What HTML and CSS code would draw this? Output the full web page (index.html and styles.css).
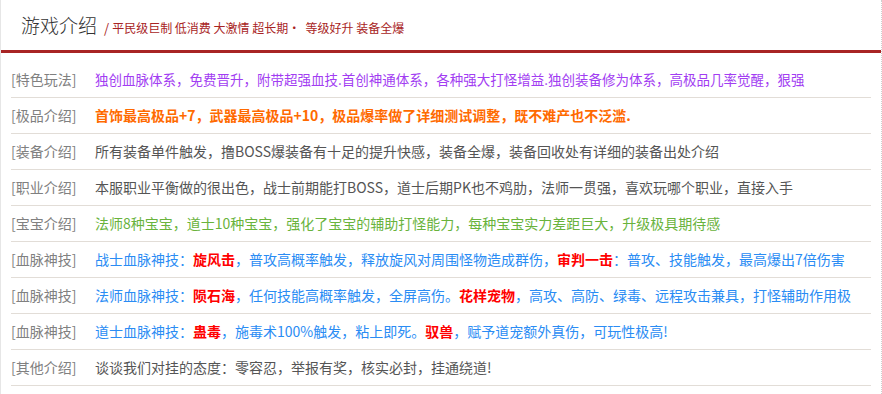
FILE: index.html
```html
<!DOCTYPE html>
<html lang="zh-CN">
<head>
<meta charset="utf-8">
<title>游戏介绍</title>
<link rel="stylesheet" href="styles.css">
</head>
<body>
<div class="panel">
  <div class="head">
    <h2 class="title">游戏介绍</h2>
    <span class="slash">/</span>
    <span class="sub">平民级巨制 低消费 大激情 超长期·&nbsp; 等级好升 装备全爆</span>
  </div>
  <ul class="list">
    <li class="row"><span class="label">[特色玩法]</span><span class="text purple">独创血脉体系，免费晋升，附带超强血技.首创神通体系，各种强大打怪增益.独创装备修为体系，高极品几率觉醒，狠强</span></li>
    <li class="row"><span class="label">[极品介绍]</span><span class="text orange">首饰最高极品+7，武器最高极品+10，极品爆率做了详细测试调整，既不难产也不泛滥.</span></li>
    <li class="row"><span class="label">[装备介绍]</span><span class="text gray">所有装备单件触发，撸BOSS爆装备有十足的提升快感，装备全爆，装备回收处有详细的装备出处介绍</span></li>
    <li class="row"><span class="label">[职业介绍]</span><span class="text gray">本服职业平衡做的很出色，战士前期能打BOSS，道士后期PK也不鸡肋，法师一贯强，喜欢玩哪个职业，直接入手</span></li>
    <li class="row"><span class="label">[宝宝介绍]</span><span class="text green">法师8种宝宝，道士10种宝宝，强化了宝宝的辅助打怪能力，每种宝宝实力差距巨大，升级极具期待感</span></li>
    <li class="row"><span class="label">[血脉神技]</span><span class="text blue">战士血脉神技：<b class="hot">旋风击</b>，普攻高概率触发，释放旋风对周围怪物造成群伤，<b class="hot">审判一击</b>：普攻、技能触发，最高爆出7倍伤害</span></li>
    <li class="row"><span class="label">[血脉神技]</span><span class="text blue">法师血脉神技：<b class="hot">陨石海</b>，任何技能高概率触发，全屏高伤。<b class="hot">花样宠物</b>，高攻、高防、绿毒、远程攻击兼具，打怪辅助作用极</span></li>
    <li class="row"><span class="label">[血脉神技]</span><span class="text blue">道士血脉神技：<b class="hot">蛊毒</b>，施毒术100%触发，粘上即死。<b class="hot">驭兽</b>，赋予道宠额外真伤，可玩性极高!</span></li>
    <li class="row"><span class="label">[其他介绍]</span><span class="text gray">谈谈我们对挂的态度：零容忍，举报有奖，核实必封，挂通绕道!</span></li>
  </ul>
</div>
</body>
</html>
```
FILE: styles.css
```css
html, body {
  margin: 0;
  padding: 0;
  background: #ffffff;
}
body {
  font-family: "Noto Sans CJK SC", "Microsoft YaHei", sans-serif;
  font-size: 14px;
  color: #555;
}
.panel {
  width: 880px;
  height: 394px;
  border-left: 1px solid #e6e6e6;
  border-right: 1px dotted #cfcfcf;
  overflow: hidden;
}
.head {
  height: 53px;
  border-bottom: 3px solid #a82424;
  display: flex;
  align-items: baseline;
  padding-left: 20px;
  box-sizing: border-box;
  padding-top: 12px;
}
.title {
  margin: 0;
  font-size: 19px;
  font-weight: 300;
  color: #333;
  line-height: 26px;
}
.slash {
  color: #a82424;
  font-size: 13px;
  margin-left: 7px;
  margin-right: 3px;
}
.sub {
  color: #a82424;
  font-size: 12px;
}
.list {
  list-style: none;
  margin: 9px 0 0 10px;
  padding: 0;
  width: 860px;
}
.row {
  display: flex;
  height: 35px;
  line-height: 35px;
  border-bottom: 1px solid #e2ddd7;
  white-space: nowrap;
  overflow: hidden;
}
.label {
  width: 84px;
  flex: none;
  color: #808080;
}
.text {
  flex: 1;
  overflow: hidden;
}
.purple { color: #a23df2; font-size: 13.5px; }
.orange { color: #ff6a00; font-weight: bold; }
.gray { color: #555; }
.green { color: #69b33c; }
.blue { color: #2a8cf4; }
.hot { color: #ff0000; font-weight: bold; }
```
